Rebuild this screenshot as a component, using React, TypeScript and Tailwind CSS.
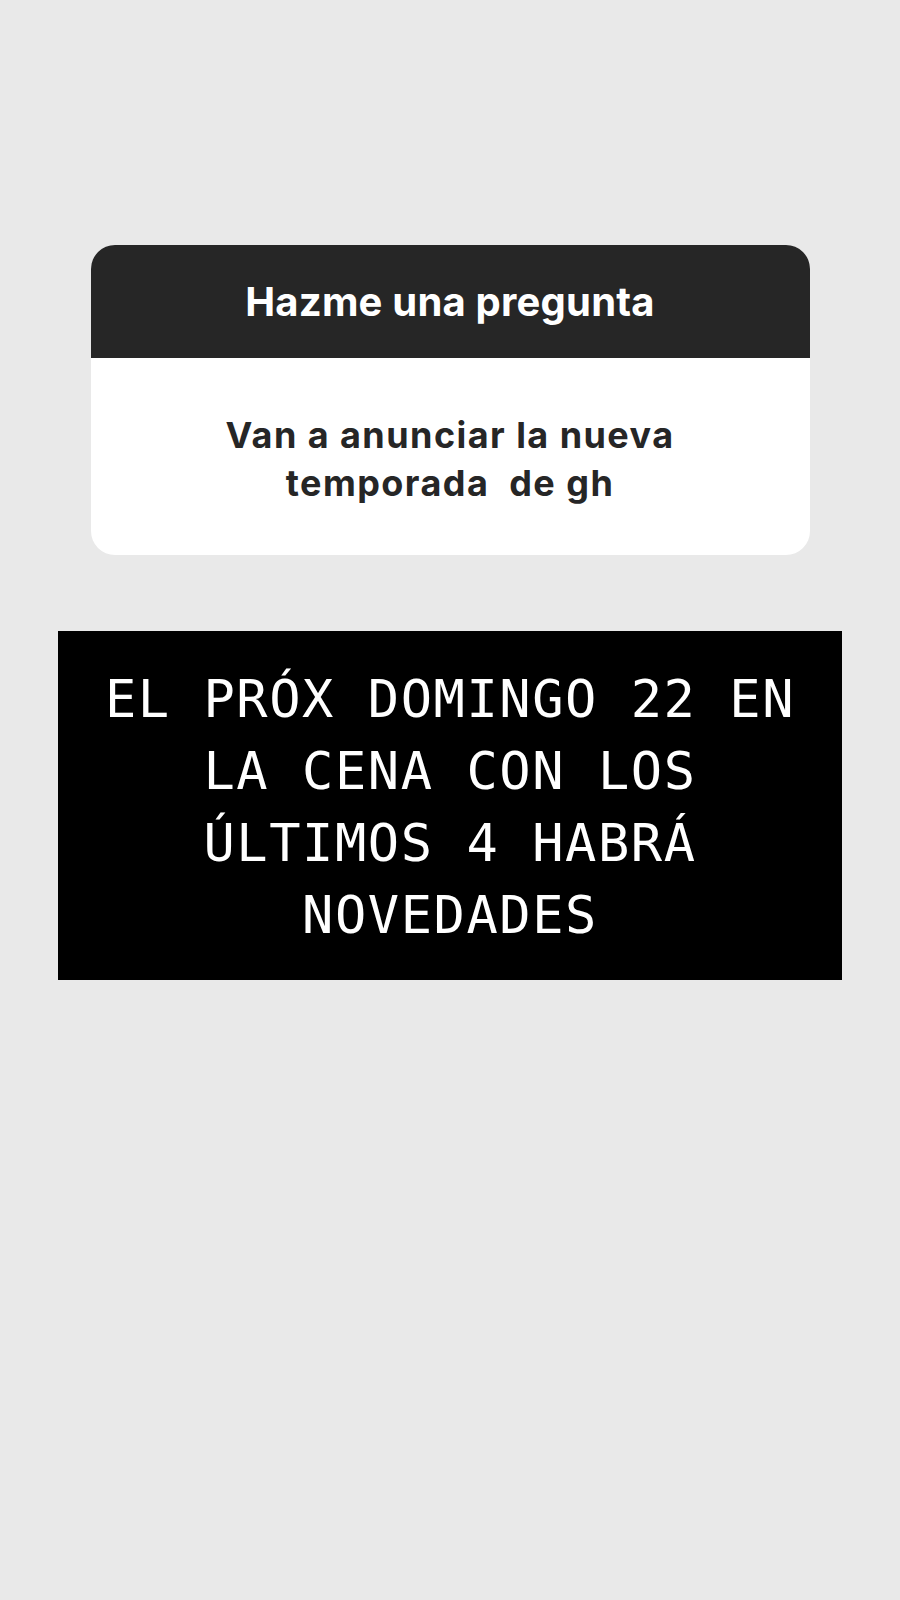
export default function App() {
  return (
    <div className="min-h-[1600px] w-[900px] bg-[#e9e9e9] pt-[245px]">
      <div className="mx-auto w-[719px] overflow-hidden rounded-[24px] bg-white">
        <div className="flex h-[113px] items-center justify-center bg-[#262626]">
          <h1 className="font-['Inter',sans-serif] text-[40px] font-bold tracking-[0.005em] text-white">
            Hazme una pregunta
          </h1>
        </div>
        <div className="flex h-[197px] items-center justify-center px-10 pt-1">
          <p className="whitespace-pre-wrap text-center font-['Inter',sans-serif] text-[36px] font-bold leading-[48px] tracking-[0.04em] text-[#262626]">
            {'Van a anunciar la nueva\ntemporada  de gh'}
          </p>
        </div>
      </div>
      <div className="mx-auto mt-[76px] h-[349px] w-[784px] bg-black pt-[32px]">
        <p className="text-center font-['DejaVu_Sans_Mono',monospace] text-[52px] leading-[72px] tracking-[0.03em] text-white">
          EL PRÓX DOMINGO 22 EN
          <br />
          LA CENA CON LOS
          <br />
          ÚLTIMOS 4 HABRÁ
          <br />
          NOVEDADES
        </p>
      </div>
    </div>
  );
}
